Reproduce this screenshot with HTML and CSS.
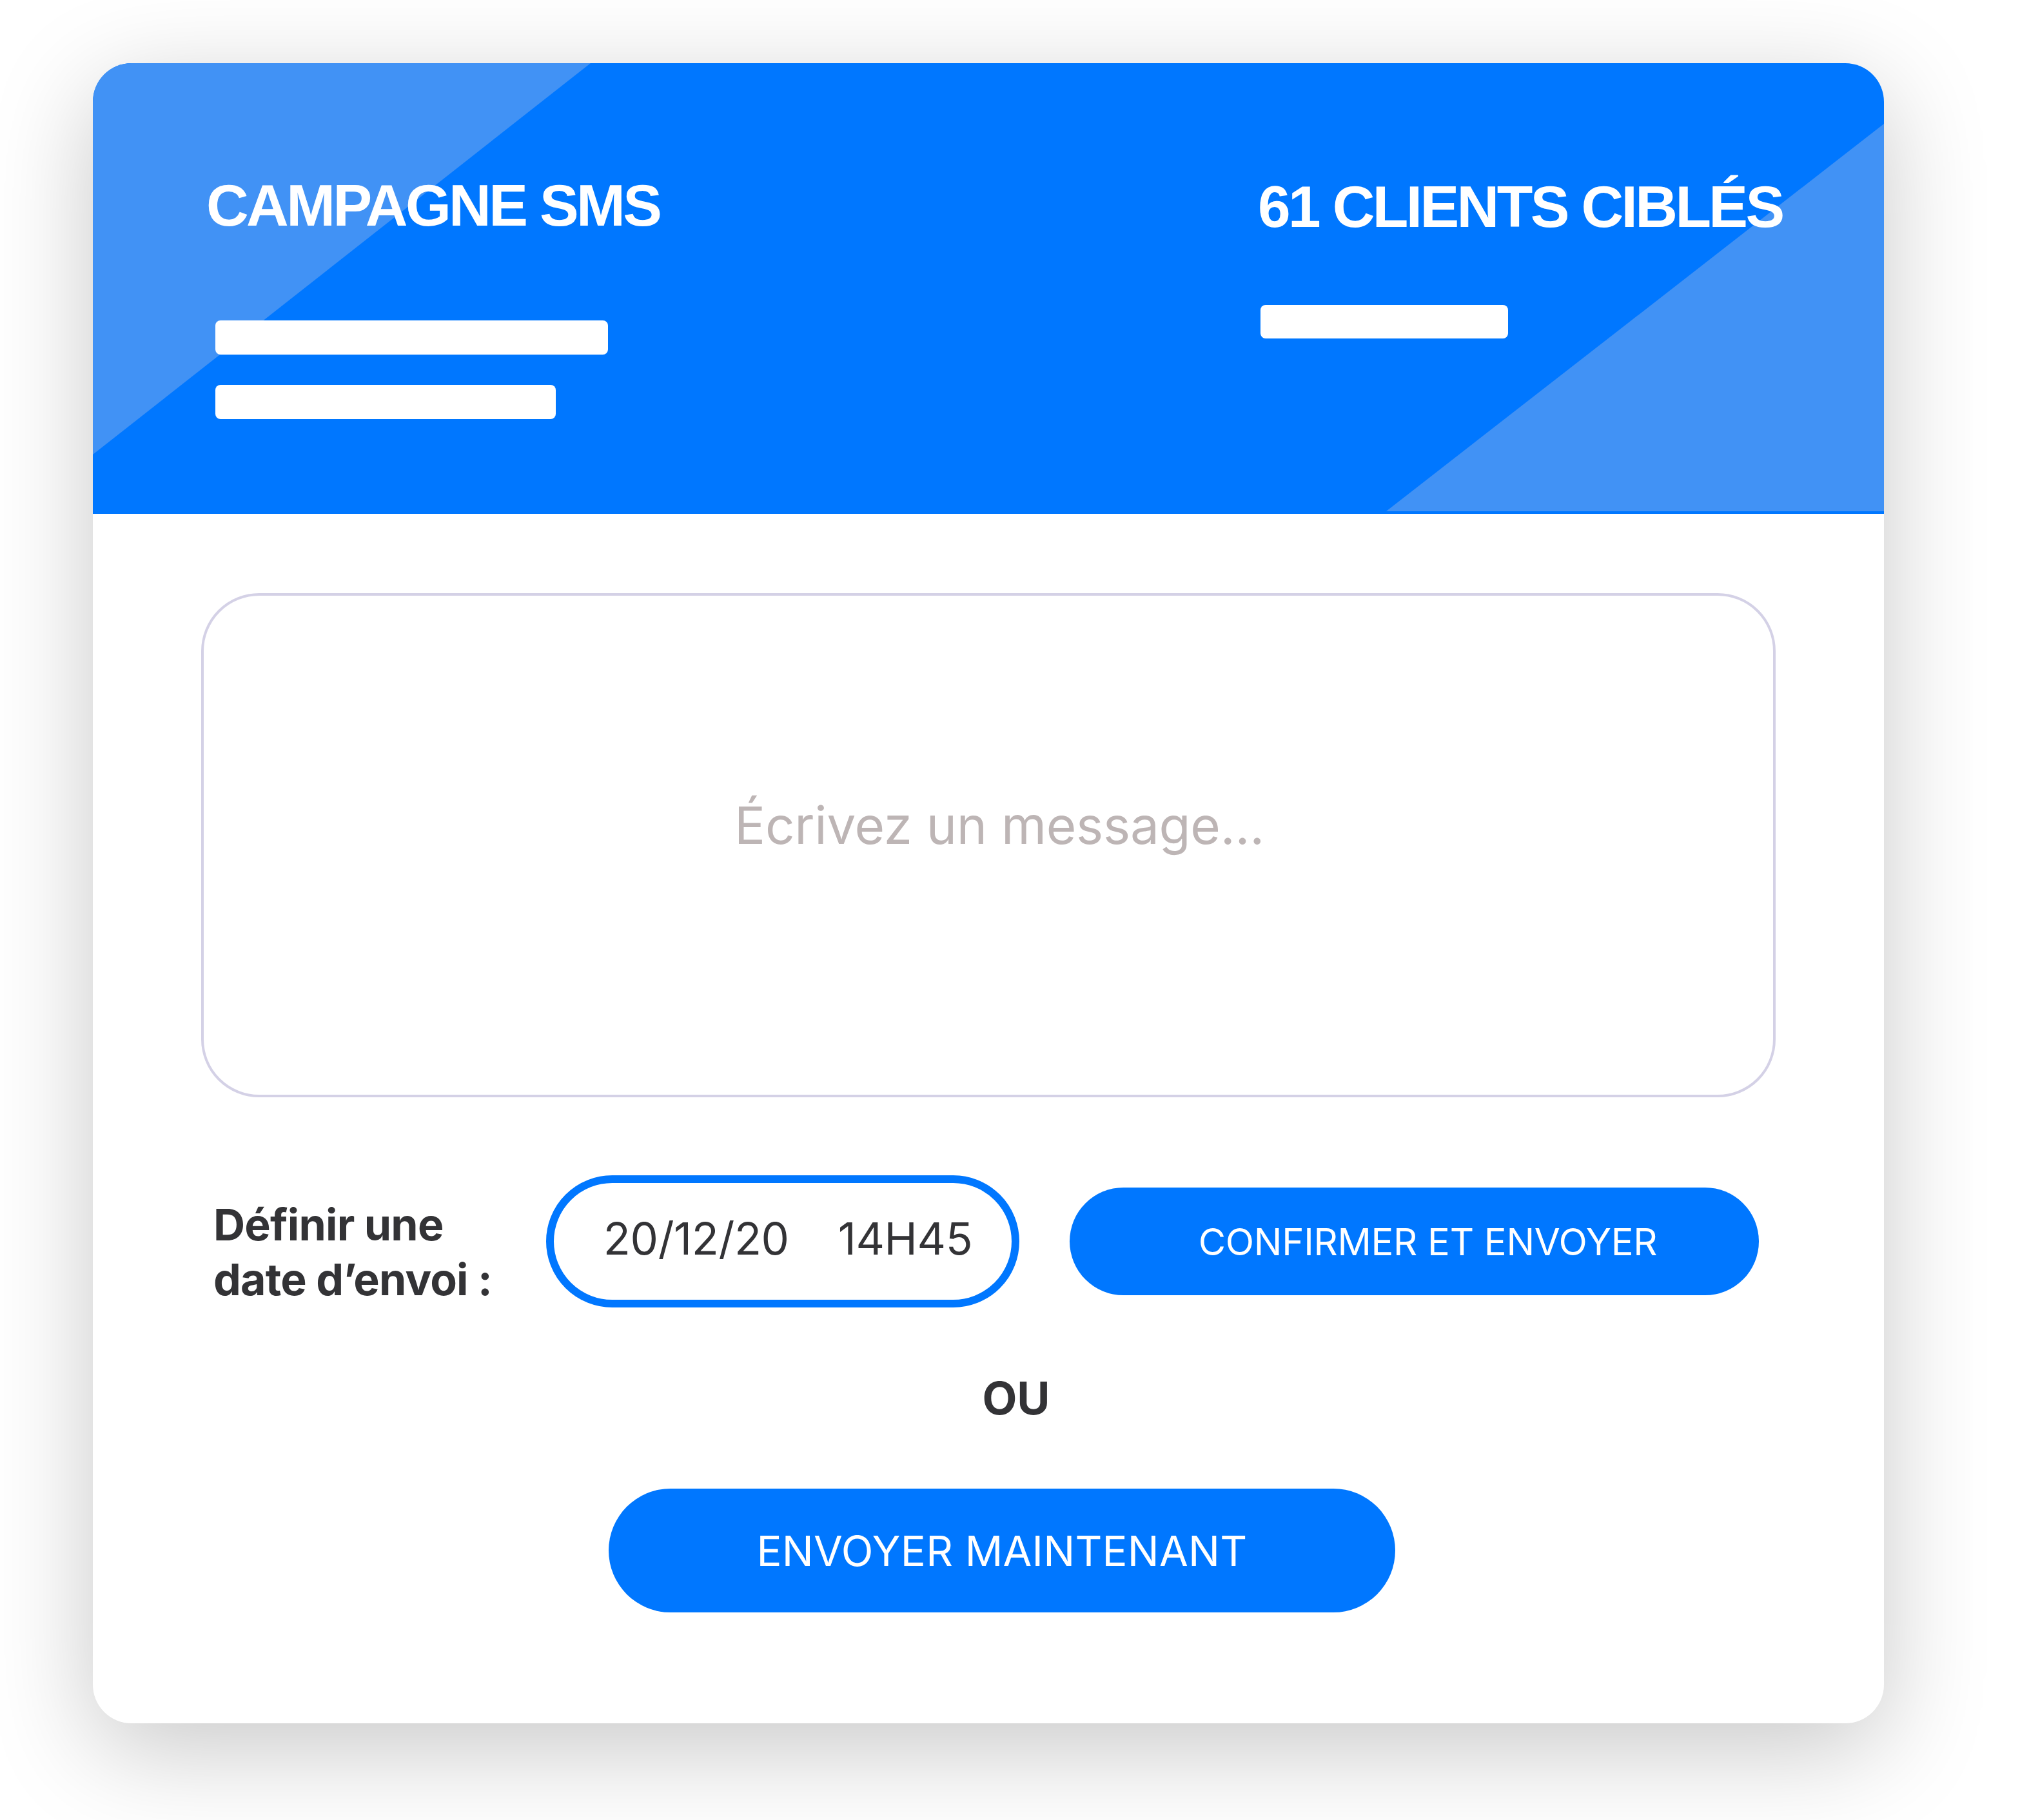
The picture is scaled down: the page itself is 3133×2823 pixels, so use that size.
FILE: index.html
```html
<!DOCTYPE html>
<html lang="fr">
<head>
    <meta charset="utf-8">
    <title>Campagne SMS</title>
    <link rel="stylesheet" href="styles.css">
</head>
<body>
    <div class="card">
        <header class="card-head">
            <div class="head-col head-left">
                <h1 class="head-title">CAMPAGNE SMS</h1>
                <div class="bar bar-lg"></div>
                <div class="bar bar-md"></div>
            </div>
            <div class="head-col head-right">
                <h2 class="head-title">61 CLIENTS CIBLÉS</h2>
                <div class="bar bar-sm"></div>
            </div>
        </header>

        <div class="card-body">
            <div class="message">
                <span class="placeholder">Écrivez un message...</span>
            </div>

            <div class="schedule">
                <label class="schedule-label">Définir une<br>date d’envoi :</label>
                <div class="date-pill">
                    <span>20/12/20</span>
                    <span>14H45</span>
                </div>
                <button class="btn btn-confirm" type="button">CONFIRMER ET ENVOYER</button>
            </div>

            <p class="or">OU</p>

            <button class="btn btn-now" type="button">ENVOYER MAINTENANT</button>
        </div>
    </div>
</body>
</html>
```

FILE: styles.css
```css
body {
    margin: 0;
    padding: 98px 0 150px 144px;
    background-color: #fff;
    font-family: Inter, "Noto Sans", sans-serif;
}
.card {
    width: 2778px;
    height: 2575px;
    background-color: #fff;
    border-radius: 60px;
    box-shadow: 0 40px 160px rgba(0, 0, 0, 0.22);
    overflow: hidden;
}

/* blue header with the two light corners */
.card-head {
    position: relative;
    height: 699px;
    box-sizing: border-box;
    padding-left: 176px;
    background-color: #0077ff;
    display: grid;
    grid-template-columns: 1631px 1fr;
}
.card-head::before,
.card-head::after {
    content: "";
    position: absolute;
    width: 772px;
    background-color: #4192f5;
}
.card-head::before {
    left: 0;
    top: 0;
    height: 607px;
    clip-path: polygon(0 0, 100% 0, 0 100%);
}
.card-head::after {
    right: 0;
    bottom: 4px;
    height: 601px;
    clip-path: polygon(100% 0, 100% 100%, 0 100%);
}
.head-col {
    position: relative;
    z-index: 1;
}
.head-left {
    padding-top: 175px;
}
.head-right {
    padding-top: 177px;
}
.head-title {
    margin: 0;
    color: #fff;
    font-family: "Liberation Sans", Arial, sans-serif;
    font-weight: 700;
    font-size: 91px;
    line-height: 91px;
    letter-spacing: -3.6px;
    white-space: nowrap;
}
.bar {
    height: 53px;
    background-color: #fff;
    border-radius: 8px;
}
.bar-lg {
    width: 609px;
    margin: 133px 0 0 14px;
}
.bar-md {
    width: 528px;
    margin: 47px 0 0 14px;
}
.bar-sm {
    width: 384px;
    height: 52px;
    margin: 107px 0 0 4px;
}

/* body */
.card-body {
    padding: 123px 168px 0;
    display: flex;
    flex-direction: column;
    align-items: center;
}
.message {
    align-self: stretch;
    height: 782px;
    box-sizing: border-box;
    border: 4px solid #d4d1e6;
    border-radius: 90px;
    padding: 307px 0 0 34px;
    text-align: center;
    font-size: 80px;
    line-height: normal;
}
.placeholder {
    color: #bdb5b5;
    letter-spacing: -0.3px;
}
.schedule {
    align-self: stretch;
    display: flex;
    align-items: center;
    margin-top: 121px;
    padding-left: 19px;
}
.schedule-label {
    flex: none;
    width: 516px;
    margin-top: 32px;
    color: #333336;
    font-weight: 700;
    font-size: 68px;
    line-height: 85px;
    letter-spacing: -0.8px;
}
.date-pill {
    flex: none;
    width: 734px;
    height: 205px;
    box-sizing: border-box;
    border: 12px solid #0077ff;
    border-radius: 103px;
    padding: 0 0 10px 16px;
    display: flex;
    align-items: center;
    justify-content: center;
    gap: 76px;
    color: #333336;
    font-size: 69px;
    letter-spacing: -0.4px;
}
.btn {
    border: none;
    background-color: #0077ff;
    color: #fff;
    font-family: Inter, "Noto Sans", sans-serif;
    font-weight: 400;
    border-radius: 100px;
    cursor: pointer;
}
.btn-confirm {
    flex: none;
    width: 1069px;
    height: 167px;
    margin-left: 78px;
    padding-left: 48px;
    font-size: 58px;
    letter-spacing: -0.3px;
}
.or {
    margin: 98px 0 0 86px;
    color: #333336;
    font-weight: 700;
    font-size: 70px;
    line-height: normal;
}
.btn-now {
    width: 1220px;
    height: 192px;
    margin: 98px 0 0 42px;
    font-size: 65px;
    letter-spacing: 0.2px;
}
```
